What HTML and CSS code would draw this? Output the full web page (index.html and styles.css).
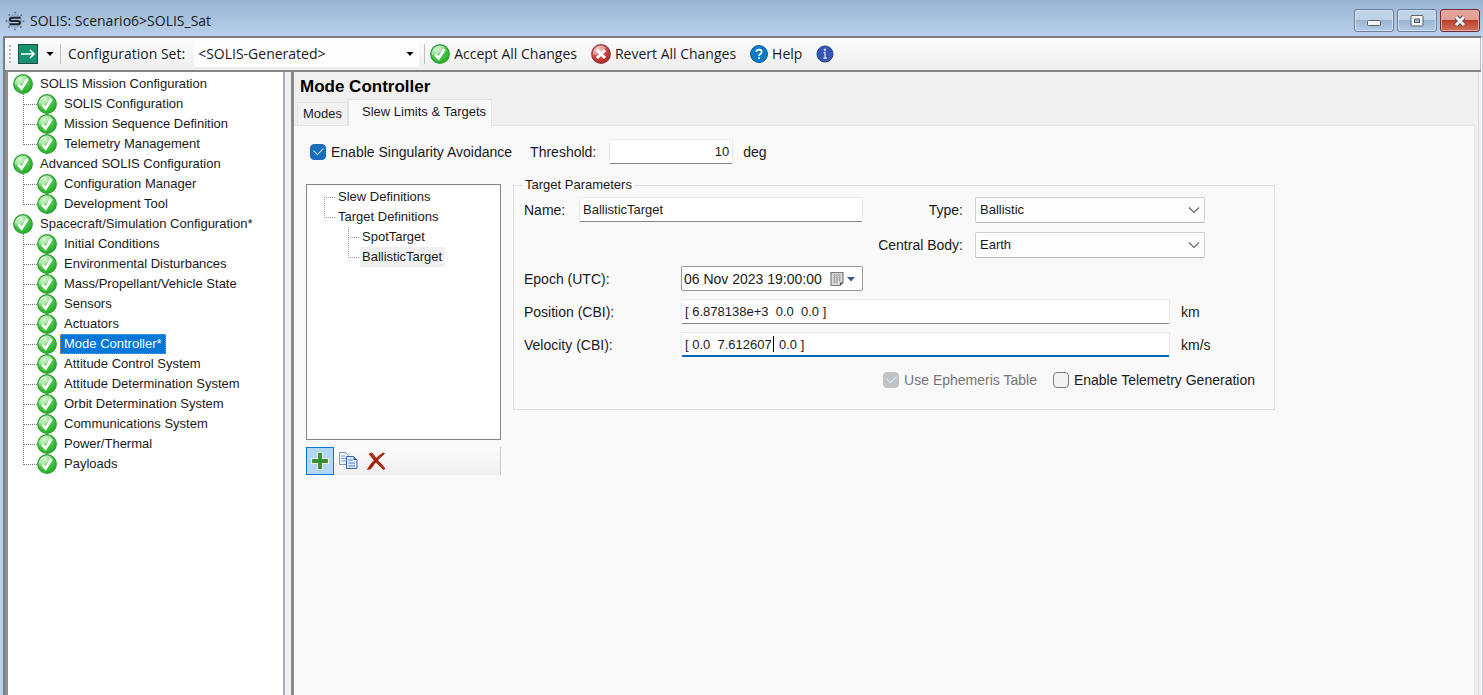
FILE: index.html
```html
<!DOCTYPE html>
<html lang="en">
<head>
    <meta charset="UTF-8">
    <meta name="viewport" content="width=device-width, initial-scale=1.0">
    <title>SOLIS: Scenario6&gt;SOLIS_Sat</title>
    <link rel="stylesheet" href="styles.css">
</head>
<body>
    <!-- Shared icons -->
    <svg class="sprite" aria-hidden="true">
        <defs>
            <radialGradient id="green" cx="0.35" cy="0.25" r="0.8">
                <stop offset="0" stop-color="#b5f0b0"/>
                <stop offset="0.5" stop-color="#4fc94b"/>
                <stop offset="1" stop-color="#1fae22"/>
            </radialGradient>
            <radialGradient id="red" cx="0.35" cy="0.25" r="0.8">
                <stop offset="0" stop-color="#eeb0b0"/>
                <stop offset="0.5" stop-color="#cf4f4f"/>
                <stop offset="1" stop-color="#ad2323"/>
            </radialGradient>
        </defs>
        <symbol id="ok" viewBox="0 0 20 20">
            <circle cx="10" cy="10" r="9.3" fill="url(#green)" stroke="#2f9a35" stroke-width="1.2"/>
            <path d="M2 11A8 8 0 0 1 15 3.5Q11 10 2 11z" fill="#fff" opacity="0.4"/>
            <path d="M5.2 10.5l3.4 4L14.6 5" fill="none" stroke="#fff" stroke-width="2.8"/>
        </symbol>
        <symbol id="chevron" viewBox="0 0 12 8">
            <path d="M1 1.5l5 5 5-5" fill="none" stroke="#666" stroke-width="1.2"/>
        </symbol>
        <symbol id="drop" viewBox="0 0 8 4">
            <path d="M0.5 0h7L4 4z"/>
        </symbol>
    </svg>

    <div class="window">
        <header class="titlebar">
            <svg class="logo" viewBox="0 0 20 20">
                <circle cx="10" cy="10" r="8.5" fill="none" stroke="#56708e" stroke-width="1.6" stroke-dasharray="1.8 4.87" stroke-dashoffset="0.9"/>
                <circle cx="10" cy="10" r="6.3" fill="none" stroke="#8098b3" stroke-width="1"/>
                <path d="M15.5 6.8H7.500Q5 6.800 5 8.400T7.500 10h5Q15 10 15 11.600T12.500 13.200H4.500" fill="none" stroke="#1c242d" stroke-width="2"/>
            </svg>
            <span class="caption">SOLIS: Scenario6&gt;SOLIS_Sat</span>
            <button class="win-btn" aria-label="Minimize">
                <svg viewBox="0 0 16 14"><rect x="1.500" y="6.500" width="13" height="5" rx="1" fill="#f4f4f4" stroke="#57606d"/></svg>
            </button>
            <button class="win-btn" aria-label="Maximize">
                <svg viewBox="0 0 16 14"><rect x="2" y="1.500" width="12" height="10.500" rx="1" fill="#f4f4f4" stroke="#57606d"/><rect x="5.500" y="5" width="5" height="3.500" fill="#9db5d1" stroke="#57606d"/></svg>
            </button>
            <button class="win-btn close" aria-label="Close">
                <svg viewBox="0 0 16 14"><path d="M4 3l8 8M12 3l-8 8" stroke="#5d4a52" stroke-width="5"/><path d="M4 3l8 8M12 3l-8 8" stroke="#f4f4f4" stroke-width="3"/></svg>
            </button>
        </header>

        <div class="frame">
            <div class="toolbar">
                <span class="grip"></span>
                <button class="tool go" aria-label="Go">
                    <svg width="20" height="20" viewBox="0 0 20 20"><rect x="0.500" y="0.500" width="19" height="19" fill="#16926f" stroke="#1d4c48"/><path d="M3 10h13M12 6l4 4-4 4" fill="none" stroke="#fff" stroke-width="1.600"/></svg>
                    <svg width="8" height="4"><use href="#drop"/></svg>
                </button>
                <span class="sep"></span>
                <label for="configSet">Configuration Set:</label>
                <div class="select config">
                    <select id="configSet">
                        <option>&lt;SOLIS-Generated&gt;</option>
                    </select>
                    <svg width="8" height="4"><use href="#drop"/></svg>
                </div>
                <span class="sep"></span>
                <button class="tool"><svg width="20" height="20"><use href="#ok"/></svg>Accept All Changes</button>
                <button class="tool">
                    <svg width="20" height="20" viewBox="0 0 20 20"><circle cx="10" cy="10" r="9.300" fill="url(#red)" stroke="#9b3838" stroke-width="1.200"/><path d="M2 11A8 8 0 0 1 15 3.500Q11 10 2 11z" fill="#fff" opacity="0.350"/><path d="M6 6l8 8M14 6l-8 8" stroke="#fff" stroke-width="3"/></svg>Revert All Changes
                </button>
                <button class="tool">
                    <svg width="18" height="18" viewBox="0 0 18 18"><circle cx="9" cy="9" r="8.500" fill="#0a7ac4" stroke="#0b5d9c"/><path d="M6.300 7Q6.300 4.600 9 4.600T11.700 7Q11.700 8.200 10.300 9T9 11" fill="none" stroke="#fff" stroke-width="1.700"/><rect x="8.100" y="12.200" width="1.800" height="1.800" fill="#fff"/></svg>Help
                </button>
                <button class="tool" aria-label="About">
                    <svg width="18" height="18" viewBox="0 0 18 18"><circle cx="9" cy="9" r="8" fill="#3358b5" stroke="#27459a"/><circle cx="9" cy="4.800" r="1.200" fill="#c9d6f5"/><path d="M7.500 7.500H9V13M7.300 13.300h3.600" fill="none" stroke="#c9d6f5" stroke-width="1.400"/></svg>
                </button>
            </div>

            <div class="panes">
                <nav class="nav">
                    <ul class="tree">
                        <li><a href="#"><svg><use href="#ok"/></svg><span>SOLIS Mission Configuration</span></a>
                            <ul>
                                <li><a href="#"><svg><use href="#ok"/></svg><span>SOLIS Configuration</span></a></li>
                                <li><a href="#"><svg><use href="#ok"/></svg><span>Mission Sequence Definition</span></a></li>
                                <li><a href="#"><svg><use href="#ok"/></svg><span>Telemetry Management</span></a></li>
                            </ul>
                        </li>
                        <li><a href="#"><svg><use href="#ok"/></svg><span>Advanced SOLIS Configuration</span></a>
                            <ul>
                                <li><a href="#"><svg><use href="#ok"/></svg><span>Configuration Manager</span></a></li>
                                <li><a href="#"><svg><use href="#ok"/></svg><span>Development Tool</span></a></li>
                            </ul>
                        </li>
                        <li><a href="#"><svg><use href="#ok"/></svg><span>Spacecraft/Simulation Configuration*</span></a>
                            <ul>
                                <li><a href="#"><svg><use href="#ok"/></svg><span>Initial Conditions</span></a></li>
                                <li><a href="#"><svg><use href="#ok"/></svg><span>Environmental Disturbances</span></a></li>
                                <li><a href="#"><svg><use href="#ok"/></svg><span>Mass/Propellant/Vehicle State</span></a></li>
                                <li><a href="#"><svg><use href="#ok"/></svg><span>Sensors</span></a></li>
                                <li><a href="#"><svg><use href="#ok"/></svg><span>Actuators</span></a></li>
                                <li><a href="#" class="selected"><svg><use href="#ok"/></svg><span>Mode Controller*</span></a></li>
                                <li><a href="#"><svg><use href="#ok"/></svg><span>Attitude Control System</span></a></li>
                                <li><a href="#"><svg><use href="#ok"/></svg><span>Attitude Determination System</span></a></li>
                                <li><a href="#"><svg><use href="#ok"/></svg><span>Orbit Determination System</span></a></li>
                                <li><a href="#"><svg><use href="#ok"/></svg><span>Communications System</span></a></li>
                                <li><a href="#"><svg><use href="#ok"/></svg><span>Power/Thermal</span></a></li>
                                <li><a href="#"><svg><use href="#ok"/></svg><span>Payloads</span></a></li>
                            </ul>
                        </li>
                    </ul>
                </nav>

                <main class="main">
                    <h1>Mode Controller</h1>
                    <div class="tabs">
                        <button class="tab">Modes</button>
                        <button class="tab active">Slew Limits &amp; Targets</button>
                    </div>
                    <div class="page">
                        <div class="threshold">
                            <label class="check"><input type="checkbox" checked>Enable Singularity Avoidance</label>
                            <label for="threshold">Threshold:</label>
                            <input type="text" id="threshold" class="text" value="10">
                            <span>deg</span>
                        </div>

                        <div class="columns">
                            <div class="defs">
                                <div class="defs-list">
                                    <ul class="defs-tree">
                                        <li><a href="#">Slew Definitions</a></li>
                                        <li><a href="#">Target Definitions</a>
                                            <ul>
                                                <li><a href="#">SpotTarget</a></li>
                                                <li><a href="#" class="current">BallisticTarget</a></li>
                                            </ul>
                                        </li>
                                    </ul>
                                </div>
                                <div class="defs-tools">
                                    <button class="hot" aria-label="Add">
                                        <svg width="20" height="20" viewBox="0 0 20 20"><path d="M7.500 1.500h5v6h6v5h-6v6h-5v-6h-6v-5h6z" fill="#3a8f33" stroke="#e4f2e0" stroke-width="1.200"/></svg>
                                    </button>
                                    <button aria-label="Copy">
                                        <svg width="20" height="20" viewBox="0 0 20 20"><path d="M1.500 1.500h6l3 3v9h-9z" fill="#eef4fc" stroke="#8795ad"/><path d="M3 5h4M3 7.500h5M3 10h5" stroke="#7ba0dc"/><path d="M8.500 5.500h7l3.500 3.500v8.500H8.500z" fill="#dce9fb" stroke="#3b5fae"/><path d="M15.500 5.500V9H19z" fill="#3b5fae"/><path d="M10.500 9h4M10.500 12h6.500M10.500 15h6.500" stroke="#4d7fd6"/></svg>
                                    </button>
                                    <button aria-label="Delete">
                                        <svg width="20" height="20" viewBox="0 0 20 20"><path d="M3 3l3-1q5 7 13 15.500l-1.500 1Q9 11 3 3z" fill="#b02a10" stroke="#b02a10"/><path d="M17 2l1.500 0.500Q10 9 5 17.500l-3.500 1Q7 8.500 17 2z" fill="#9f2410" stroke="#9f2410"/></svg>
                                    </button>
                                </div>
                            </div>

                            <fieldset class="params">
                                <legend>Target Parameters</legend>
                                <div class="params-top">
                                    <div class="name">
                                        <label for="name">Name:</label>
                                        <input type="text" id="name" class="text" value="BallisticTarget">
                                    </div>
                                    <div class="pickers">
                                        <label for="type">Type:</label>
                                        <div class="select">
                                            <select id="type"><option>Ballistic</option></select>
                                            <svg width="12" height="8"><use href="#chevron"/></svg>
                                        </div>
                                        <label for="body">Central Body:</label>
                                        <div class="select">
                                            <select id="body"><option>Earth</option></select>
                                            <svg width="12" height="8"><use href="#chevron"/></svg>
                                        </div>
                                    </div>
                                </div>
                                <div class="rows">
                                    <label for="epoch">Epoch (UTC):</label>
                                    <div class="date">
                                        <input type="text" id="epoch" value="06 Nov 2023 19:00:00">
                                        <button aria-label="Open calendar">
                                            <svg width="26" height="16" viewBox="0 0 26 16"><path d="M1 1.500h12v10l-3 3H1z" fill="#dadada" stroke="#7a7a7a" stroke-width="1.200"/><path d="M3 4h8M3 6.500h8M3 9h8M3 11.500h5M4.500 3v9.500M7 3v9.500M9.500 3v7.500" stroke="#a9abb0"/><path d="M13 11.500h-3v3z" fill="#555"/><path d="M17 6h8l-4 4.500z" fill="#3c5a87"/></svg>
                                        </button>
                                    </div>
                                    <span></span>
                                    <label for="position">Position (CBI):</label>
                                    <input type="text" id="position" class="text" value="[ 6.878138e+3  0.0  0.0 ]">
                                    <span>km</span>
                                    <label for="velocity">Velocity (CBI):</label>
                                    <div class="focused">
                                        <input type="text" id="velocity" class="text" value="[ 0.0  7.612607  0.0 ]">
                                        <span class="caret"></span>
                                    </div>
                                    <span>km/s</span>
                                </div>
                                <div class="options">
                                    <label class="check disabled"><input type="checkbox" checked disabled>Use Ephemeris Table</label>
                                    <label class="check"><input type="checkbox">Enable Telemetry Generation</label>
                                </div>
                            </fieldset>
                        </div>
                    </div>
                </main>
            </div>
        </div>
    </div>
</body>
</html>
```

FILE: styles.css
```css
* {
    box-sizing: border-box;
}
body {
    margin: 0;
    font-family: "Liberation Sans", Arial, sans-serif;
    font-size: 13px;
    line-height: 16px;
    color: #1a1a1a;
    background-color: #b9d1ea;
}
button, input, select {
    font: inherit;
    color: inherit;
}
button {
    padding: 0;
    border: 0;
    background: none;
}
svg {
    flex: none;
}
ul {
    margin: 0;
    padding: 0;
    list-style: none;
}
a {
    color: inherit;
    text-decoration: none;
}
.sprite {
    position: absolute;
    width: 0;
    height: 0;
}
.window {
    display: flex;
    flex-direction: column;
    min-height: 100vh;
    padding: 0 1px 0 3px;
}

/* Title bar */
.titlebar {
    display: flex;
    align-items: center;
    height: 36px;
    margin: 0 -1px 0 -3px;
    padding: 5px 3px 0 5px;
    gap: 3px;
    background: linear-gradient(#98b3d1, #b8d0ea);
}
.logo {
    width: 20px;
    height: 20px;
}
.caption {
    flex: 1;
    padding-left: 2px;
    font-family: "Open Sans", "Noto Sans", sans-serif;
    font-size: 14px;
}
.win-btn {
    display: flex;
    align-items: center;
    justify-content: center;
    width: 40px;
    height: 23px;
    border: 1px solid #6b7f9b;
    border-radius: 3px;
    box-shadow: inset 0 0 0 1px #d3e1f1;
    background: linear-gradient(#bfd2e8 45%, #9bb4d0 50%, #b3cce7);
}
.win-btn svg {
    width: 16px;
    height: 14px;
}
.win-btn.close {
    border-color: #6e2a35;
    box-shadow: inset 0 0 0 1px #e6aaa2;
    background: linear-gradient(#e3a298 45%, #bb3f28 50%, #d3735f);
}

/* Toolbar */
.frame {
    display: flex;
    flex: 1;
    flex-direction: column;
    border-top: 2px solid #7d7d7d;
    border-left: 2px solid #7d7d7d;
    border-right: 1px solid #fff;
    background-color: #f0f0f0;
}
.toolbar {
    display: flex;
    align-items: center;
    height: 32px;
    padding-left: 4px;
    border-right: 1px solid #bbb;
    background: linear-gradient(#fdfdfd, #eee);
    font-family: "Open Sans", "Noto Sans", sans-serif;
    font-size: 14px;
}
.grip {
    width: 2px;
    height: 18px;
    margin-right: 7px;
    background: repeating-linear-gradient(#b5b5b5 0 2px, transparent 2px 4px);
}
.sep {
    width: 1px;
    height: 20px;
    background-color: #bdbdbd;
}
.tool {
    display: flex;
    align-items: center;
    gap: 4px;
    margin-right: 14px;
}
.tool.go {
    gap: 8px;
    margin-right: 6px;
}
.toolbar label {
    padding: 0 9px 0 7px;
}
.sep + .tool {
    margin-left: 5px;
}

/* Drop-downs */
.select {
    position: relative;
}
.select select {
    width: 100%;
    height: 26px;
    padding: 0 24px 0 4px;
    appearance: none;
    border: 1px solid #d0d0d0;
    border-bottom-color: #b8b8b8;
    border-radius: 2px;
    background-color: #fdfdfd;
}
.select svg {
    position: absolute;
    top: 9px;
    right: 5px;
    pointer-events: none;
}
.select.config {
    width: 225px;
    margin-right: 5px;
}
.config select {
    border: 0;
}
.config svg {
    top: 11px;
}

/* Navigation tree */
.panes {
    display: flex;
    flex: 1;
    border-top: 2px solid #858585;
}
.nav {
    flex: 0 0 280px;
    padding: 2px 0 0 5px;
    border-left: 3px solid #8e8e8e;
    border-right: 2px solid #a9abb8;
    background-color: #fff;
}
.tree a {
    display: flex;
    align-items: center;
    height: 20px;
}
.tree a svg {
    width: 20px;
    height: 20px;
}
.tree a span {
    height: 20px;
    padding: 0 4px;
    margin-left: 3px;
    line-height: 20px;
    white-space: nowrap;
}
.tree .selected span {
    color: #fff;
    background-color: #0078d7;
    outline: 1px dotted #d58a3a;
    outline-offset: -1px;
}
.tree ul {
    padding-left: 10px;
}
.tree ul li {
    display: flex;
    align-items: center;
    height: 20px;
    background: repeating-linear-gradient(#777 0 1px, transparent 1px 2px) 0 0 / 1px 100% no-repeat;
}
.tree ul li:last-child {
    background-size: 1px 11px;
}
.tree ul li::before {
    content: "";
    width: 14px;
    border-top: 1px dotted #777;
}

/* Main panel */
.main {
    flex: 1;
    display: flex;
    flex-direction: column;
    min-width: 0;
    margin: 0 2px 0 6px;
    padding-right: 3px;
    border-left: 3px solid #8a8a8a;
    border-right: 1px solid #e0e0e0;
}
h1 {
    margin: 0;
    padding: 5px 6px 0;
    font-size: 17px;
    line-height: 20px;
    color: #000;
}
.tabs {
    display: flex;
    align-items: flex-end;
    height: 29px;
    padding-left: 3px;
    margin-bottom: -1px;
}
.tab {
    height: 24px;
    padding: 0 5px;
    border: 1px solid #e3e3e3;
    background-color: #f2f2f2;
}
.tab.active {
    z-index: 1;
    height: 27px;
    padding: 0 5px 2px 13px;
    border-bottom: 0;
    background-color: #f9f9f9;
}
.page {
    flex: 1;
    padding: 13px 12px;
    border: 1px solid #e5e5e5;
    border-width: 1px 1px 0 0;
    background-color: #f9f9f9;
}
.page label, .page span {
    font-size: 14px;
}
.text {
    height: 25px;
    padding: 0 3px;
    border: 1px solid #e8e8e8;
    border-bottom: 1px solid #868686;
    border-radius: 2px;
    background-color: #fff;
    outline: 0;
}
.check {
    display: flex;
    align-items: center;
    gap: 5px;
}
.check input {
    appearance: none;
    width: 16px;
    height: 16px;
    margin: 0;
    border: 1px solid #7c7c7c;
    border-radius: 4px;
    background-color: #f3f3f3;
}
.check input:checked {
    display: grid;
    place-items: center;
    border-color: #1a6cbd;
    background-color: #1a6cbd;
}
.check input:checked::before {
    content: "";
    width: 8px;
    height: 5px;
    margin-bottom: 3px;
    border: solid #d5e5f5;
    border-width: 0 0 1px 1px;
    transform: rotate(-45deg);
}
.check input:disabled {
    border-color: #c3c3c3;
    background-color: #c3c3c3;
}
.check.disabled {
    color: #767676;
}
.threshold {
    display: flex;
    align-items: center;
    padding-left: 4px;
}
.threshold .check {
    margin-right: 18px;
}
.threshold .text {
    width: 124px;
    margin: 0 10px 0 13px;
    text-align: right;
}
.columns {
    display: flex;
    align-items: flex-start;
    gap: 12px;
    margin-top: 13px;
}

/* Definition list */
.defs {
    flex: 0 0 195px;
    display: flex;
    flex-direction: column;
    gap: 7px;
    padding-top: 7px;
}
.defs-list {
    height: 256px;
    padding: 2px 0 0 17px;
    border: 1px solid #82858f;
    background-color: #fff;
}
.defs-tree li {
    background: repeating-linear-gradient(#999 0 1px, transparent 1px 2px) 0 0 / 1px 100% no-repeat;
}
.defs-tree > li:first-child {
    background-position: 0 10px;
}
.defs-tree li:last-child {
    background-size: 1px 11px;
}
.defs-tree ul {
    padding-left: 24px;
}
.defs-tree a {
    display: inline-flex;
    align-items: center;
    height: 20px;
    padding-right: 3px;
    vertical-align: top;
}
.defs-tree a::before {
    content: "";
    width: 11px;
    margin-right: 3px;
    border-top: 1px dotted #999;
}
.defs-tree .current {
    background: linear-gradient(#f0f0f0, #f0f0f0) 12px 0 no-repeat;
}
.defs-tools {
    display: flex;
    height: 28px;
    border-right: 1px solid #ccc;
    background: linear-gradient(#fbfbfb, #efefef);
}
.defs-tools button {
    display: flex;
    align-items: center;
    justify-content: center;
    width: 28px;
    height: 28px;
}
.defs-tools .hot {
    border: 1px solid #0078d7;
    background-color: #b3d7f3;
}

/* Target parameters */
.params {
    flex: 0 1 762px;
    min-width: 0;
    margin: 0;
    padding: 4px 19px 17px 10px;
    border: 1px solid #e0e0e0;
}
.params legend {
    margin-left: -2px;
    padding: 0 3px;
}
.params-top {
    display: flex;
    align-items: flex-start;
    gap: 17px;
}
.name {
    display: flex;
    align-items: center;
    flex: 0 1 339px;
}
.name label {
    flex: 0 0 55px;
}
.name .text {
    flex: 1;
    min-width: 0;
}
.pickers {
    display: grid;
    grid-template-columns: 83px 230px;
    align-items: center;
    gap: 9px 12px;
}
.pickers label {
    justify-self: end;
    white-space: nowrap;
}
.rows {
    display: grid;
    grid-template-columns: 157px 1fr 85px;
    grid-auto-rows: 25px;
    align-items: center;
    row-gap: 8px;
    margin-top: 8px;
}
.rows > span {
    padding-left: 11px;
}
.rows .text {
    width: 100%;
}
.date {
    display: flex;
    align-items: center;
    width: 182px;
    height: 25px;
    border: 1px solid #999;
    border-radius: 2px;
    background-color: #fff;
    font-size: 14px;
}
.date input {
    flex: 1;
    min-width: 0;
    padding: 0 0 0 2px;
    border: 0;
    background: none;
}
.date button {
    display: flex;
    margin-right: 6px;
}
.focused {
    position: relative;
}
.focused .text {
    border-bottom: 2px solid #0067c0;
}
.caret {
    position: absolute;
    top: 4px;
    left: 92px;
    width: 1px;
    height: 16px;
    background-color: #000;
}
.options {
    display: flex;
    align-items: center;
    justify-content: flex-end;
    gap: 16px;
    height: 25px;
    margin-top: 10px;
}
```
